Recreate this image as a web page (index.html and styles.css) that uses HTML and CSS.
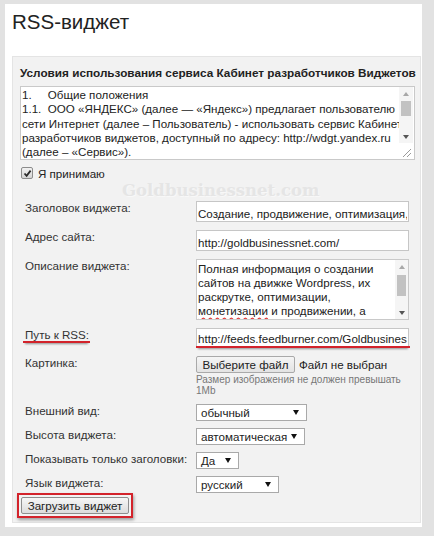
FILE: index.html
```html
<!DOCTYPE html>
<html lang="ru">
<head>
    <meta charset="UTF-8">
    <meta name="viewport" content="width=device-width, initial-scale=1.0">
    <title>RSS-виджет</title>
    <link rel="stylesheet" href="styles.css">
</head>
<body>
    <div class="page">
        <h1 class="page-title">RSS-виджет</h1>

        <div class="panel">
            <h2 class="panel-title">Условия использования сервиса Кабинет разработчиков Виджетов</h2>

            <div class="box terms">
                <div class="box-text">
                    <div>1.&#9;Общие положения</div>
                    <div>1.1.&#9;ООО «ЯНДЕКС» (далее — «Яндекс») предлагает пользователю</div>
                    <div>сети Интернет (далее – Пользователь) - использовать сервис Кабинет</div>
                    <div>разработчиков виджетов, доступный по адресу: http://wdgt.yandex.ru</div>
                    <div>(далее – «Сервис»).</div>
                    <div>1.2.&#9;Настоящие Условия использования Сервиса являются</div>
                </div>
                <div class="scroll-col">
                    <div class="scroll">
                        <span class="arrow up"></span>
                        <span class="track"><span class="thumb"></span></span>
                        <span class="arrow down"></span>
                    </div>
                    <div class="resizer">
                        <svg width="14" height="15" viewBox="0 0 14 15">
                            <path d="M4 13 L12 5 M8 13 L12 9" stroke="#9a9a9a" stroke-width="1" fill="none"/>
                        </svg>
                    </div>
                </div>
            </div>

            <label class="agree">
                <span class="check">
                    <svg width="9" height="9" viewBox="0 0 9 9">
                        <path d="M1.5 4.5 L3.6 6.8 L7.6 1.6" stroke="#2b2b2b" stroke-width="1.8" fill="none"/>
                    </svg>
                </span>
                Я принимаю
            </label>

            <div class="watermark">Goldbusinessnet.com</div>

            <div class="fields">
                <div class="row">
                    <div class="label">Заголовок виджета:</div>
                    <input class="input" type="text" value="Создание, продвижение, оптимизация, монетизация">
                </div>
                <div class="row">
                    <div class="label">Адрес сайта:</div>
                    <input class="input" type="text" value="http://goldbusinessnet.com/">
                </div>
                <div class="row">
                    <div class="label">Описание виджета:</div>
                    <div class="box desc">
                        <div class="box-text">
                            <div>Полная информация о создании</div>
                            <div>сайтов на движке Wordpress, их</div>
                            <div>раскрутке, оптимизации,</div>
                            <div><span class="typo">монетизации</span> и продвижении, а</div>
                        </div>
                        <div class="scroll">
                            <span class="arrow up"></span>
                            <span class="track"><span class="thumb"></span></span>
                            <span class="arrow down"></span>
                        </div>
                    </div>
                </div>
                <div class="row">
                    <div class="label"><span class="mark">Путь к RSS:</span></div>
                    <div class="input-mark">
                        <input class="input" type="text" value="http://feeds.feedburner.com/Goldbusinessnet">
                    </div>
                </div>
                <div class="row">
                    <div class="label">Картинка:</div>
                    <div class="file">
                        <div class="file-line">
                            <button class="btn btn-file" type="button">Выберите файл</button>
                            <span>Файл не выбран</span>
                        </div>
                        <div class="hint">Размер изображения не должен превышать<br>1Mb</div>
                    </div>
                </div>
                <div class="row row-select">
                    <div class="label">Внешний вид:</div>
                    <div class="select w-look"><span>обычный</span><i class="caret"></i></div>
                </div>
                <div class="row row-select">
                    <div class="label">Высота виджета:</div>
                    <div class="select w-height"><span>автоматическая</span><i class="caret"></i></div>
                </div>
                <div class="row row-select">
                    <div class="label">Показывать только заголовки:</div>
                    <div class="select w-yes"><span>Да</span><i class="caret"></i></div>
                </div>
                <div class="row row-last">
                    <div class="label">Язык виджета:</div>
                    <div class="select w-lang"><span>русский</span><i class="caret"></i></div>
                </div>
            </div>

            <div class="submit-mark">
                <button class="btn btn-submit" type="button">Загрузить виджет</button>
            </div>
        </div>
    </div>
</body>
</html>
```

FILE: styles.css
```css
body {
    margin: 0;
    background-color: #e2e2e2;
    font-family: "Liberation Sans", Arial, sans-serif;
    font-size: 11.6px;
    color: #333;
}
.page {
    width: 417px;
    box-sizing: border-box;
    margin: 4px 0 0 5px;
    padding: 6px 1px 4px 7px;
    background-color: #ffffff;
}
.page-title {
    margin: 0 0 22px;
    font-size: 20.5px;
    font-weight: normal;
    line-height: 24px;
    color: #222;
}
.panel {
    background-color: #f2f2f2;
    border: 1px solid #e4e4e4;
    padding: 8px 6px 4px 7px;
}
.panel-title {
    margin: 0;
    font-size: 11.75px;
    font-weight: bold;
    line-height: 16px;
    color: #222;
    white-space: nowrap;
}

/* text boxes with a drawn scrollbar */
.box {
    display: flex;
    box-sizing: border-box;
    background-color: #fff;
    border: 1px solid #c9c9c9;
    overflow: hidden;
}
.box-text {
    flex: 1;
    min-width: 0;
    overflow: hidden;
    color: #222;
}
.box-text div {
    white-space: pre;
    tab-size: 8;
}
.terms {
    width: 395px;
    height: 74px;
    margin-top: 5px;
}
.terms .box-text {
    padding: 1px 1px 0;
    line-height: 14.25px;
}
.desc {
    width: 213px;
    height: 61px;
}
.desc .box-text {
    padding: 2px 1px 0 1px;
    line-height: 14px;
}
.scroll-col {
    display: flex;
    flex-direction: column;
    width: 15px;
}
.scroll {
    display: flex;
    flex-direction: column;
    flex: none;
    width: 14px;
    background-color: #f5f5f5;
}
.scroll-col .scroll {
    flex: 1;
}
.desc .scroll {
    width: 13px;
}
.arrow {
    height: 13px;
    display: flex;
    align-items: center;
    justify-content: center;
}
.arrow::before {
    content: "";
    border-left: 3.5px solid transparent;
    border-right: 3.5px solid transparent;
}
.arrow.up::before {
    border-bottom: 4px solid #a8a8a8;
}
.arrow.down::before {
    border-top: 4px solid #555;
}
.track {
    flex: 1;
    padding: 1px 2px 0;
}
.desc .track {
    padding-top: 2px;
}
.thumb {
    display: block;
    height: 15px;
    background-color: #c2c2c2;
}
.desc .thumb {
    height: 21px;
}
.resizer {
    height: 16px;
    background-color: #fff;
    display: flex;
    align-items: flex-end;
}
.typo {
    text-decoration: underline wavy #e03030;
    text-decoration-skip-ink: none;
    text-underline-offset: 2px;
}

.agree {
    display: flex;
    align-items: center;
    height: 16px;
    margin-top: 5px;
    padding-left: 1px;
    color: #222;
}
.check {
    display: flex;
    align-items: center;
    justify-content: center;
    width: 10px;
    height: 10px;
    margin-right: 5px;
    border: 1px solid #8c8c8c;
    border-radius: 2px;
    background: linear-gradient(#f2f2f2, #d4d4d4);
}
.watermark {
    height: 20px;
    padding-left: 102px;
    font-family: "DejaVu Serif", Georgia, serif;
    font-size: 16.5px;
    font-weight: bold;
    line-height: 20px;
    color: #e5e5e5;
    text-shadow: 1px 1px 0 #f8f8f8;
}

/* form rows */
.fields {
    padding-left: 5px;
}
.row {
    display: flex;
    margin-bottom: 8px;
}
.row-select {
    margin-bottom: 7px;
}
.row-last {
    margin-bottom: 0;
}
.label {
    flex: none;
    width: 171px;
    line-height: 13px;
    color: #333;
}
.mark {
    display: inline-block;
    margin-left: -2px;
    padding: 0 1px 0 2px;
    border-bottom: 2px solid #d3232b;
    box-shadow: 0 3px 2px -2px rgba(0,0,0,0.4);
}
.input {
    box-sizing: border-box;
    width: 213px;
    height: 21px;
    margin: 0;
    padding: 4px 1px 0;
    border: 1px solid #c6c6c6;
    border-radius: 0;
    background-color: #fff;
    font-family: "Liberation Sans", Arial, sans-serif;
    font-size: 11.6px;
    color: #222;
    outline: none;
}
.input-mark {
    width: 214px;
    border-bottom: 2px solid #d3232b;
    box-shadow: 0 3px 2px -2px rgba(0,0,0,0.4);
}
.input-mark .input {
    height: 18px;
    padding-top: 1px;
    border-bottom: none;
}
.file-line {
    display: flex;
    align-items: center;
    gap: 4px;
    color: #222;
}
.hint {
    margin-top: 1px;
    font-size: 10px;
    line-height: 11px;
    color: #777;
}
.btn {
    display: block;
    box-sizing: border-box;
    height: 17px;
    margin: 0;
    padding: 0;
    border-radius: 2px;
    font-family: "Liberation Sans", Arial, sans-serif;
    font-size: 11.6px;
    line-height: 15px;
    color: #222;
}
.btn-file {
    width: 99px;
    border: 1px solid #a9a9a9;
    background: linear-gradient(#f5f5f5, #e3e3e3);
}
.select {
    display: flex;
    align-items: center;
    justify-content: space-between;
    box-sizing: border-box;
    height: 17px;
    padding: 0 7px 0 4px;
    border: 1px solid #a9a9a9;
    background-color: #fff;
    line-height: 15px;
    color: #222;
}
.caret {
    border-left: 3px solid transparent;
    border-right: 3px solid transparent;
    border-top: 5px solid #111;
}
.w-look { width: 111px; }
.w-height { width: 109px; }
.w-yes { width: 43px; }
.w-lang { width: 83px; }

.submit-mark {
    width: fit-content;
    margin-left: -3px;
    padding: 2px;
    border: 2px solid #d3232b;
    box-shadow: 1px 2px 3px rgba(0,0,0,0.35);
}
.btn-submit {
    width: 108px;
    border: 1px solid #8e8e8e;
    background: linear-gradient(#f6f6f6, #dcdcdc);
}
```
